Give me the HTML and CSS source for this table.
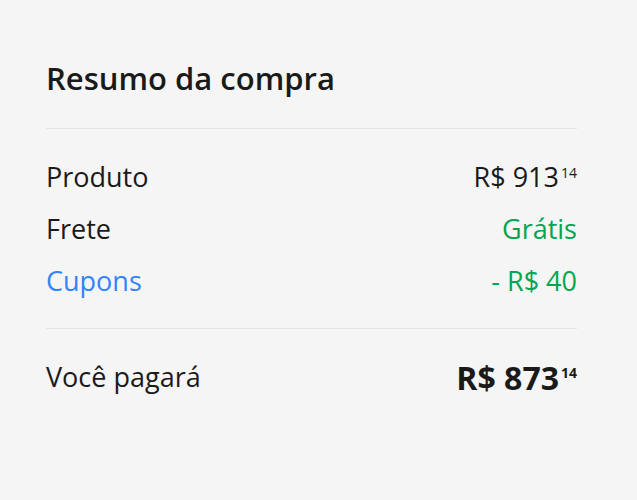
FILE: index.html
```html
<!DOCTYPE html>
<html lang="pt-BR">
<head>
  <meta charset="UTF-8" />
  <meta name="viewport" content="width=device-width, initial-scale=1.0" />
  <title>Resumo da compra</title>
  <link rel="stylesheet" href="styles.css">
</head>
<body>
  <div class="summary">
    <h2 class="summary-title">Resumo da compra</h2>

    <div class="summary-rows">
      <div class="row">
        <span>Produto</span>
        <span class="price">R$ 913<sup>14</sup></span>
      </div>
      <div class="row">
        <span>Frete</span>
        <span class="green">Grátis</span>
      </div>
      <div class="row">
        <a href="#" class="link">Cupons</a>
        <span class="green">- R$ 40</span>
      </div>
    </div>

    <div class="row total">
      <span>Você pagará</span>
      <span class="price total-price">R$ 873<sup>14</sup></span>
    </div>
  </div>
</body>
</html>
```

FILE: styles.css
```css
* { box-sizing: border-box; margin: 0; padding: 0; }
body {
  font-family: 'Open Sans', Lato, sans-serif;
  background: #f5f5f5;
  color: #1a1a1a;
}
.summary {
  width: 531px;
  margin-left: 46px;
  padding-top: 58px;
}
.summary-title {
  font-size: 31px;
  font-weight: 600;
  line-height: 40px;
  padding-bottom: 30px;
  border-bottom: 1px solid #e4e4e4;
}
.summary-rows {
  padding: 22px 0 21px;
  border-bottom: 1px solid #e4e4e4;
}
.row {
  display: flex;
  justify-content: space-between;
  align-items: baseline;
  font-size: 27px;
  line-height: 52px;
}
.link {
  color: #3483fa;
  text-decoration: none;
}
.green {
  color: #00a650;
}
.price sup {
  font-size: 14px;
  vertical-align: top;
  line-height: 1;
  position: relative;
  top: 15px;
  margin-left: 2px;
}
.total {
  padding-top: 22px;
  align-items: flex-start;
}
.total-price {
  font-size: 32px;
  font-weight: 700;
  margin-top: 1px;
}
.total-price sup {
  top: 14px;
}
```
